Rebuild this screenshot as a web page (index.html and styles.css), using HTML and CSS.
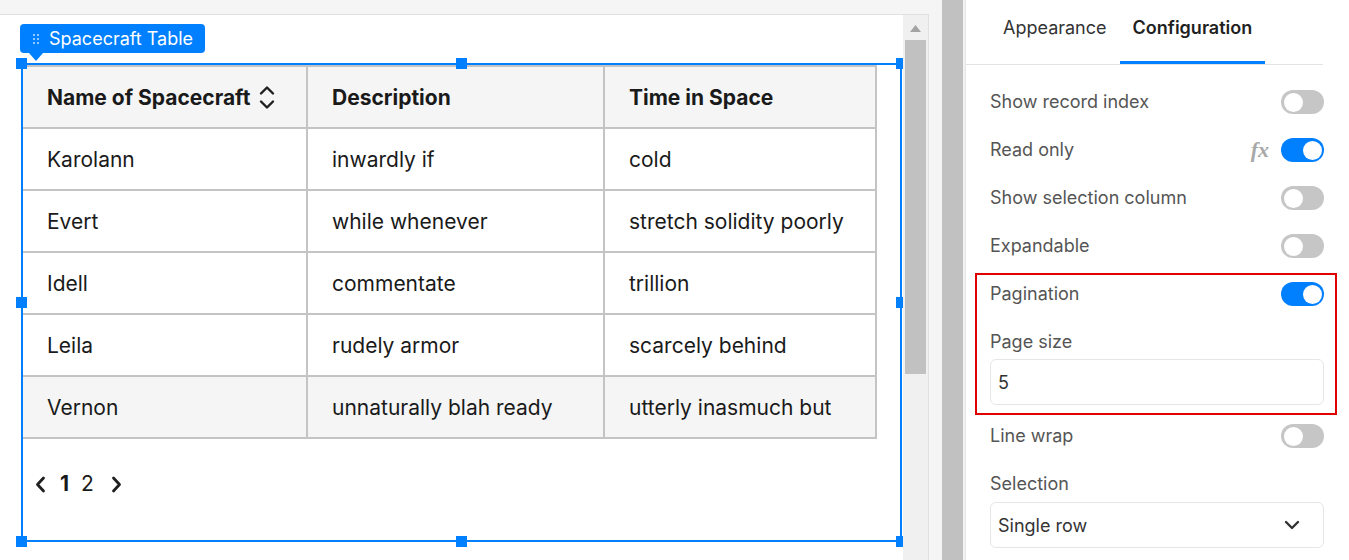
FILE: index.html
```html
<!DOCTYPE html>
<html lang="en">
<head>
<meta charset="utf-8">
<title>Spacecraft Table</title>
<link rel="stylesheet" href="styles.css">
</head>
<body>
<div class="app">
  <div class="workspace">
    <div class="canvas">
      <div class="canvas-view">
        <div class="widget">
          <div class="widget-label">
            <span class="grip"><i></i><i></i><i></i><i></i><i></i><i></i></span>
            <span>Spacecraft Table</span>
          </div>
          <span class="handle h-tl"></span><span class="handle h-tm"></span><span class="handle h-tr"></span>
          <span class="handle h-ml"></span><span class="handle h-mr"></span>
          <span class="handle h-bl"></span><span class="handle h-bm"></span><span class="handle h-br"></span>
          <table class="grid">
            <thead>
              <tr>
                <th class="c1"><span class="th-inner">Name of Spacecraft
                  <svg class="sort" width="16" height="27" viewBox="0 0 16 27"><path d="M2 9.5 8 3.5 14 9.5M2 17.5 8 23.5 14 17.5" fill="none" stroke="#1f1f1f" stroke-width="2.4" stroke-linecap="round" stroke-linejoin="round"/></svg></span></th>
                <th class="c2">Description</th>
                <th class="c3">Time in Space</th>
              </tr>
            </thead>
            <tbody>
              <tr><td>Karolann</td><td>inwardly if</td><td>cold</td></tr>
              <tr><td>Evert</td><td>while whenever</td><td>stretch solidity poorly</td></tr>
              <tr><td>Idell</td><td>commentate</td><td>trillion</td></tr>
              <tr><td>Leila</td><td>rudely armor</td><td>scarcely behind</td></tr>
              <tr class="hover"><td>Vernon</td><td>unnaturally blah ready</td><td>utterly inasmuch but</td></tr>
            </tbody>
          </table>
          <div class="pager">
            <svg class="chev" width="11" height="17" viewBox="0 0 11 17"><path d="M8.5 2 2.5 8.5 8.5 15" fill="none" stroke="#1f1f1f" stroke-width="2.8" stroke-linecap="round" stroke-linejoin="round"/></svg>
            <span class="page current">1</span>
            <span class="page">2</span>
            <svg class="chev next" width="11" height="17" viewBox="0 0 11 17"><path d="M2.5 2 8.5 8.5 2.5 15" fill="none" stroke="#1f1f1f" stroke-width="2.8" stroke-linecap="round" stroke-linejoin="round"/></svg>
          </div>
        </div>
      </div>
      <div class="vscroll">
        <svg class="vscroll-up" width="11" height="7" viewBox="0 0 11 7"><path d="M0 7 5.5 0 11 7Z" fill="#a3a3a3"/></svg>
        <div class="vscroll-thumb"></div>
      </div>
    </div>
  </div>
  <div class="splitter"></div>
  <aside class="panel">
    <nav class="tabs">
      <span class="tab">Appearance</span>
      <span class="tab active">Configuration</span>
    </nav>
    <div class="settings">
      <div class="row"><span class="label">Show record index</span><span class="toggle"></span></div>
      <div class="row"><span class="label">Read only</span><span class="row-end"><span class="fx">fx</span><span class="toggle on"></span></span></div>
      <div class="row"><span class="label">Show selection column</span><span class="toggle"></span></div>
      <div class="row"><span class="label">Expandable</span><span class="toggle"></span></div>
      <div class="highlight">
        <div class="row"><span class="label">Pagination</span><span class="toggle on"></span></div>
        <div class="field">
          <span class="label">Page size</span>
          <div class="input">5</div>
        </div>
      </div>
      <div class="row"><span class="label">Line wrap</span><span class="toggle"></span></div>
      <div class="field">
        <span class="label">Selection</span>
        <div class="input select"><span>Single row</span>
          <svg width="16" height="10" viewBox="0 0 16 10"><path d="M2 2 8 8 14 2" fill="none" stroke="#333" stroke-width="2.4" stroke-linecap="round" stroke-linejoin="round"/></svg>
        </div>
      </div>
    </div>
  </aside>
</div>
</body>
</html>
```

FILE: styles.css
```css
* { box-sizing: border-box; }
html, body { margin: 0; padding: 0; }
body {
  font-family: Inter, "Noto Sans", sans-serif;
  color: #1a1a1a;
  background: #f5f5f5;
}
.app {
  display: flex;
  height: 560px;
  width: 1349px;
  overflow: hidden;
}
.workspace {
  width: 942px;
  flex: none;
  background: #f5f5f5;
  padding-top: 14px;
}
.canvas {
  width: 929px;
  height: 546px;
  background: #fff;
  border-top: 1px solid #e0e0e0;
  border-right: 1px solid #e0e0e0;
  display: flex;
}
.canvas-view {
  width: 903px;
  flex: none;
  overflow: hidden;
  padding: 48px 0 0 21px;
}
.widget {
  position: relative;
  width: 881px;
  height: 479px;
  border: 2px solid #0080ff;
}
.widget-label {
  position: absolute;
  left: -3px;
  top: -41px;
  height: 29px;
  padding: 0 12px 0 13px;
  background: #0080ff;
  color: #fff;
  border-radius: 4px;
  display: flex;
  align-items: center;
  gap: 10px;
  font-size: 18px;
  white-space: nowrap;
}
.widget-label::after {
  content: "";
  position: absolute;
  left: 9px;
  bottom: -8px;
  border-left: 7px solid transparent;
  border-right: 7px solid transparent;
  border-top: 8px solid #0080ff;
}
.grip {
  display: grid;
  grid-template-columns: 2px 2px;
  gap: 2px 2px;
}
.grip i {
  width: 2px;
  height: 2px;
  background: rgba(255,255,255,0.75);
  border-radius: 1px;
}
.handle {
  position: absolute;
  width: 11px;
  height: 11px;
  background: #0080ff;
  z-index: 2;
}
.h-tl { left: -7px; top: -7px; }
.h-tm { left: 433px; top: -7px; }
.h-tr { right: -7px; top: -7px; }
.h-ml { left: -7px; top: 232px; }
.h-mr { right: -7px; top: 232px; }
.h-bl { left: -7px; bottom: -7px; }
.h-bm { left: 433px; bottom: -7px; }
.h-br { right: -7px; bottom: -7px; }

.grid {
  width: 854px;
  table-layout: fixed;
  border-collapse: separate;
  border-spacing: 0;
  font-size: 21px;
}
.grid th, .grid td {
  text-align: left;
  padding: 1px 0 0 24px;
  border-right: 2px solid #c4c4c4;
  border-bottom: 2px solid #c4c4c4;
  vertical-align: middle;
  white-space: nowrap;
}
.grid th {
  height: 64px;
  border-top: 2px solid #c4c4c4;
  background: #f5f5f5;
  font-weight: 650;
  color: #1a1a1a;
}
.grid th.c1 { width: 285px; }
.grid th.c2 { width: 297px; }
.grid td {
  height: 62px;
  font-weight: 400;
}
.grid tr.hover td { background: #f5f5f5; }
.th-inner {
  display: inline-flex;
  align-items: center;
  gap: 9px;
}
.sort { display: block; }

.pager {
  margin-top: 33px;
  padding-left: 12px;
  height: 24px;
  display: flex;
  align-items: center;
  font-size: 21px;
}
.chev { display: block; }
.page { padding: 0 6px; line-height: 24px; color: #1a1a1a; }
.page.current { font-weight: 700; margin-left: 8px; }
.chev.next { margin-left: 11px; }

.vscroll {
  width: 25px;
  flex: none;
  background: #f0f0f0;
  display: flex;
  flex-direction: column;
  align-items: center;
  padding-top: 10px;
}
.vscroll-up { display: block; }
.vscroll-thumb {
  margin-top: 8px;
  width: 21px;
  height: 334px;
  background: #c1c1c1;
}

.splitter {
  width: 23px;
  flex: none;
  background: #c1c1c1;
  border-right: 2px solid #f2f2f2;
}
.panel {
  flex: 1;
  background: #fff;
  border-left: 1px solid #e6e6e6;
}
.tabs {
  height: 65px;
  margin-right: 26px;
  border-bottom: 1px solid #e3e3e3;
  padding-left: 24px;
  display: flex;
}
.tab {
  padding: 0 13px 7px;
  font-size: 18px;
  color: #333;
  display: flex;
  align-items: center;
  border-bottom: 3px solid transparent;
}
.tab.active {
  font-weight: 600;
  color: #1f1f1f;
  border-bottom-color: #0080ff;
}
.settings {
  padding: 13px 25px 0 24px;
}
.row {
  height: 48px;
  display: flex;
  align-items: center;
  justify-content: space-between;
}
.label {
  font-size: 18px;
  color: #555;
  line-height: 24px;
}
.row-end {
  display: flex;
  align-items: center;
  gap: 12px;
}
.fx {
  font-family: "Liberation Serif", serif;
  font-style: italic;
  font-weight: 700;
  font-size: 22px;
  color: #a8a8a8;
  line-height: 1;
}
.toggle {
  position: relative;
  width: 43px;
  height: 24px;
  border-radius: 12px;
  background: #c6c6c6;
  flex: none;
}
.toggle::after {
  content: "";
  position: absolute;
  top: 2.5px;
  left: 2.5px;
  width: 19px;
  height: 19px;
  border-radius: 50%;
  background: #fff;
}
.toggle.on { background: #0080ff; }
.toggle.on::after { left: auto; right: 2.5px; }
.highlight {
  position: relative;
}
.highlight::after {
  content: "";
  position: absolute;
  top: 3px;
  bottom: -3px;
  left: -15px;
  right: -13px;
  border: 2px solid #e00000;
  pointer-events: none;
}
.field {
  padding: 12px 0 7px;
  display: flex;
  flex-direction: column;
}
.field .input { margin-top: 5px; }
.field .input.select { margin-top: 6px; }
.input {
  height: 46px;
  border: 1px solid #e6e6e6;
  border-radius: 6px;
  padding: 0 23px 0 7px;
  display: flex;
  align-items: center;
  justify-content: space-between;
  font-size: 18px;
  color: #333;
}
.select svg { display: block; }
```
